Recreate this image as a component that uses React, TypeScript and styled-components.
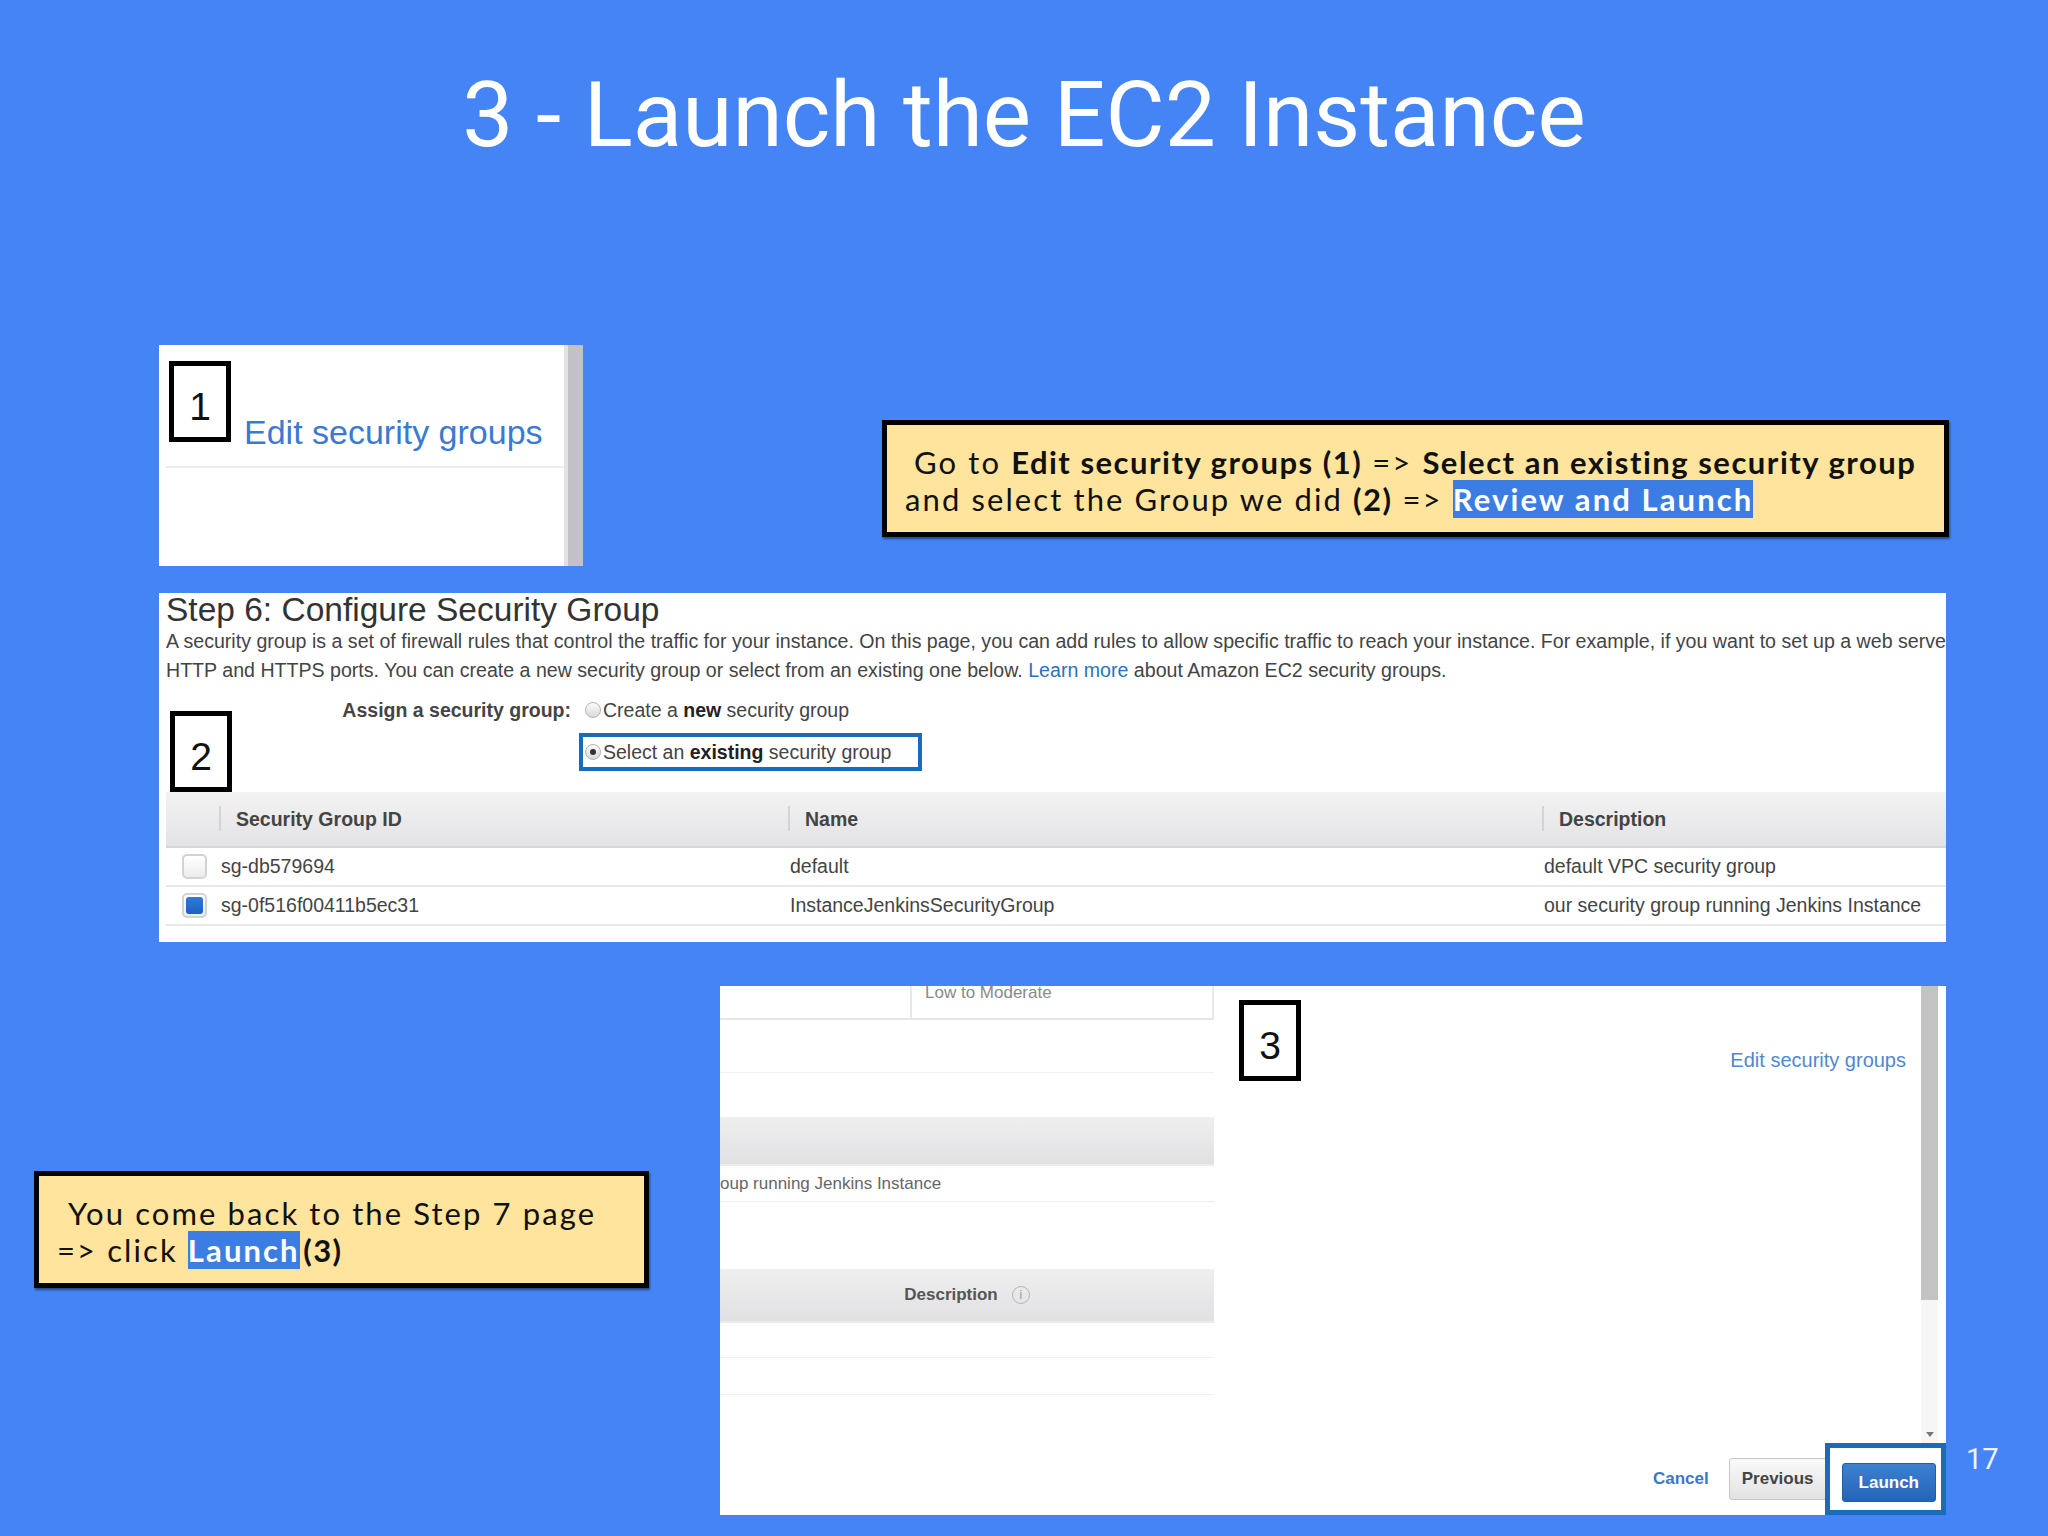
import React from "react";
import styled, { createGlobalStyle } from "styled-components";

const GlobalStyle = createGlobalStyle`
  html, body {
    margin: 0;
    padding: 0;
    background: #4584f4;
  }
  * {
    box-sizing: border-box;
  }
`;

const Slide = styled.div`
  width: 2048px;
  height: 1536px;
  background: #4584f4;
  display: flex;
  flex-direction: column;
  overflow: hidden;
  font-family: "Liberation Sans", Arial, sans-serif;
`;

const Title = styled.h1`
  margin: 60px 0 0;
  height: 110px;
  line-height: 110px;
  font-family: Roboto, "Noto Sans", sans-serif;
  font-weight: 400;
  font-size: 91px;
  color: #ffffff;
  text-align: center;
`;

const TopRow = styled.div`
  display: flex;
  align-items: flex-start;
  margin-top: 175px;
  padding-left: 159px;
`;

/* ---- screenshot 1: edit security groups ---- */

const EditPanel = styled.div`
  width: 424px;
  height: 221px;
  background: #ffffff;
  display: flex;
`;

const EditBody = styled.div`
  flex: 1;
  display: flex;
  flex-direction: column;
  padding: 16px 0 0 10px;
`;

const EditHeader = styled.div`
  display: flex;
  align-items: flex-start;
  gap: 13px;
`;

const NumBox = styled.div`
  width: 62px;
  height: 81px;
  flex-shrink: 0;
  border: 5px solid #000;
  background: #fff;
  display: flex;
  align-items: center;
  justify-content: center;
  padding-top: 10px;
  font-family: "Liberation Sans", Arial, sans-serif;
  font-size: 39px;
  color: #111;
`;

const EditLink = styled.span`
  margin-top: 51px;
  font-size: 34px;
  line-height: 40px;
  color: #3b7ad2;
  white-space: nowrap;
`;

const EditDivider = styled.div`
  margin: 14px 0 0 -4px;
  height: 2px;
  background: #ededed;
`;

const EditScroll = styled.div`
  width: 19px;
  background: #c2c1c5;
  border-left: 4px solid #e2e2e4;
`;

/* ---- callouts ---- */

const Callout = styled.div<{ $left: number; $top: number; $width: number }>`
  margin-left: ${(p) => p.$left}px;
  margin-top: ${(p) => p.$top}px;
  width: ${(p) => p.$width}px;
  height: 117px;
  flex-shrink: 0;
  border: 5px solid #000;
  box-shadow: 1px 2px 2px rgba(0, 0, 0, 0.45);
  background: #fee49c;
  padding: 19px 0 0 18px;
  font-family: Lato, "Open Sans", sans-serif;
  font-size: 31px;
  line-height: 37px;
  letter-spacing: 2.1px;
  color: #111;
  white-space: nowrap;
`;

const CalloutLine = styled.div<{ $indent?: number }>`
  padding-left: ${(p) => p.$indent ?? 0}px;
`;

const B = styled.b`
  font-weight: 700;
  letter-spacing: 1.5px;
`;

const Highlight = styled.span`
  background: #3c7de4;
  color: #ffffff;
  font-weight: 700;
`;

/* ---- screenshot 2: step 6 ---- */

const StepPanel = styled.section`
  margin: 27px 0 0 159px;
  width: 1787px;
  height: 349px;
  background: #ffffff;
  overflow: hidden;
  padding-left: 7px;
  white-space: nowrap;
  color: #444;
`;

const StepTitle = styled.h2`
  margin: 0;
  font-weight: 400;
  font-size: 33.5px;
  line-height: 34px;
  color: #333;
`;

const StepText = styled.p`
  margin: 0;
  font-size: 19.6px;
  line-height: 29px;
  color: #444;
`;

const TextLink = styled.span`
  color: #2a72c0;
`;

const FormArea = styled.div`
  display: flex;
  align-items: flex-end;
  height: 107px;
  padding-left: 4px;
`;

const FormFields = styled.div`
  align-self: flex-start;
  margin-top: 7px;
  display: grid;
  grid-template-columns: 339px auto;
  column-gap: 8px;
  row-gap: 5px;
  font-size: 19.5px;
`;

const FieldLabel = styled.div`
  height: 36px;
  line-height: 36px;
  text-align: right;
  font-weight: 700;
  color: #444;
`;

const Option = styled.label<{ $selected?: boolean }>`
  display: flex;
  align-items: center;
  height: ${(p) => (p.$selected ? 38 : 36)}px;
  width: ${(p) => (p.$selected ? "343px" : "auto")};
  padding-left: ${(p) => (p.$selected ? 2 : 6)}px;
  border: ${(p) => (p.$selected ? "4px solid #1b6cb8" : "none")};
  line-height: 24px;
  color: #444;

  b {
    color: #222;
  }
`;

const Radio = styled.span<{ $checked?: boolean }>`
  width: 16px;
  height: 16px;
  margin-right: 2px;
  border-radius: 50%;
  border: 1px solid #b4b4b4;
  background: linear-gradient(#fbfbfb, #d9d9d9);
  display: flex;
  align-items: center;
  justify-content: center;

  &::after {
    content: "";
    width: 6px;
    height: 6px;
    border-radius: 50%;
    background: ${(p) => (p.$checked ? "#333" : "transparent")};
  }
`;

const columns = "53px 569px 754px 1fr";

const HeaderRow = styled.div`
  display: grid;
  grid-template-columns: ${columns};
  height: 56px;
  align-items: center;
  background: linear-gradient(#f3f3f4, #e3e3e5);
  border-bottom: 2px solid #d6d6d8;
`;

const HeaderCell = styled.div<{ $divider?: boolean }>`
  position: relative;
  padding-left: 17px;
  font-size: 19.5px;
  font-weight: 700;
  color: #444;

  &::before {
    content: "";
    display: ${(p) => (p.$divider ? "block" : "none")};
    position: absolute;
    left: 0;
    top: 50%;
    width: 2px;
    height: 25px;
    margin-top: -13px;
    background: #d4d4d6;
  }
`;

const DataRow = styled.div`
  display: grid;
  grid-template-columns: ${columns};
  height: 39px;
  align-items: center;
  border-bottom: 2px solid #e8e8e8;
`;

const DataCell = styled.div`
  padding-left: 2px;
  font-size: 19.5px;
  color: #444;
`;

const CheckCell = styled.div`
  padding-left: 16px;
  display: flex;
  align-items: center;
`;

const Checkbox = styled.span<{ $checked?: boolean }>`
  width: 25px;
  height: 25px;
  border-radius: 5px;
  border: 2px solid #d3d3d3;
  padding: 2px;
  background: linear-gradient(#ffffff, #ececec);
  display: flex;

  &::after {
    content: "";
    flex: 1;
    border-radius: 3px;
    background: ${(p) =>
      p.$checked ? "linear-gradient(#2f7ad8, #1c62bd)" : "transparent"};
  }
`;

/* ---- bottom row ---- */

const BottomRow = styled.div`
  display: flex;
  align-items: flex-start;
  margin-top: 44px;
`;

const ReviewPanel = styled.section`
  margin-left: 71px;
  width: 1226px;
  height: 529px;
  flex-shrink: 0;
  background: #ffffff;
  display: flex;
  flex-direction: column;
  overflow: hidden;
`;

const ReviewBody = styled.div`
  height: 457px;
  display: flex;
`;

const SideColumn = styled.div`
  width: 494px;
  display: flex;
  flex-direction: column;
  font-size: 17px;
  color: #666;
`;

const LowRow = styled.div`
  height: 34px;
  border-bottom: 2px solid #e6e6e6;
  padding-left: 190px;
  display: flex;
`;

const LowCell = styled.div`
  flex: 1;
  border-left: 2px solid #e8e8e8;
  border-right: 2px solid #e8e8e8;
  padding-left: 13px;
  line-height: 20px;
  margin-top: -3px;
  color: #8a8a8a;
`;

const Spacer = styled.div<{ $h: number; $line?: boolean }>`
  height: ${(p) => p.$h}px;
  flex-shrink: 0;
  border-bottom: ${(p) => (p.$line ? "1px solid #f0f0f0" : "none")};
`;

const GrayBar = styled.div<{ $h: number }>`
  height: ${(p) => p.$h}px;
  flex-shrink: 0;
  background: linear-gradient(#efeff0, #e1e1e3);
  border-bottom: 2px solid #ececec;
  display: flex;
  align-items: center;
  justify-content: center;
  gap: 14px;
  font-weight: 700;
  color: #555;
`;

const TextRow = styled.div`
  height: 36px;
  flex-shrink: 0;
  display: flex;
  align-items: center;
  border-bottom: 1px solid #eeeeee;
  white-space: nowrap;
  color: #666;
`;

const InfoIcon = styled.span`
  width: 18px;
  height: 18px;
  border-radius: 50%;
  border: 1.5px solid #b5b5b5;
  display: flex;
  align-items: center;
  justify-content: center;
  font-size: 12px;
  font-weight: 400;
  color: #9a9a9a;
`;

const MiddleColumn = styled.div`
  flex: 1;
  display: flex;
  align-items: flex-start;
  padding: 14px 15px 0 25px;
`;

const SmallLink = styled.span`
  margin-left: auto;
  margin-top: 48px;
  font-size: 20px;
  line-height: 24px;
  color: #5088d0;
  white-space: nowrap;
`;

const ScrollBar = styled.div`
  width: 17px;
  margin-right: 8px;
  display: flex;
  flex-direction: column;
`;

const ScrollThumb = styled.div`
  height: 314px;
  background: #c3c3c3;
`;

const ScrollTrack = styled.div`
  flex: 1;
  background: #f6f6f6;
  display: flex;
  align-items: flex-end;
  justify-content: center;
  padding-bottom: 6px;

  &::after {
    content: "";
    border-left: 4px solid transparent;
    border-right: 4px solid transparent;
    border-top: 5px solid #777;
  }
`;

const Footer = styled.div`
  height: 72px;
  display: flex;
  justify-content: flex-end;
  align-items: center;
`;

const CancelLink = styled.span`
  margin-right: 20px;
  font-size: 17px;
  font-weight: 700;
  color: #3a77c9;
`;

const Button = styled.button<{ $primary?: boolean }>`
  height: ${(p) => (p.$primary ? 39 : 42)}px;
  padding: 0 ${(p) => (p.$primary ? 16 : 12)}px;
  border-radius: 3px;
  border: 1px solid ${(p) => (p.$primary ? "#1f5ea8" : "#c6c6c6")};
  background: ${(p) =>
    p.$primary
      ? "linear-gradient(#3c81d2, #2464b5)"
      : "linear-gradient(#fafafa, #e2e2e2)"};
  color: ${(p) => (p.$primary ? "#ffffff" : "#444444")};
  font-family: "Liberation Sans", Arial, sans-serif;
  font-size: 17px;
  font-weight: 700;
`;

const LaunchFrame = styled.div`
  align-self: stretch;
  border: 5px solid #1b6cb8;
  padding: 15px 5px 8px 12px;
  margin-left: -2px;
  display: flex;
  align-items: flex-start;
`;

const PageNumber = styled.div`
  margin: 456px 0 0 20px;
  font-family: Roboto, "Noto Sans", sans-serif;
  font-size: 29px;
  line-height: 34px;
  color: #eef3ff;
`;

export default function App() {
  return (
    <>
      <GlobalStyle />
      <Slide>
        <Title>3 - Launch the EC2 Instance</Title>

        <TopRow>
          <EditPanel>
            <EditBody>
              <EditHeader>
                <NumBox>1</NumBox>
                <EditLink>Edit security groups</EditLink>
              </EditHeader>
              <EditDivider />
            </EditBody>
            <EditScroll />
          </EditPanel>

          <Callout $left={299} $top={75} $width={1067}>
            <CalloutLine $indent={9}>
              Go to <B>Edit security groups (1)</B> =&gt;{" "}
              <B>Select an existing security group</B>
            </CalloutLine>
            <CalloutLine>
              and select the Group we did <B>(2)</B> =&gt;{" "}
              <Highlight>Review and Launch </Highlight>
            </CalloutLine>
          </Callout>
        </TopRow>

        <StepPanel>
          <StepTitle>Step 6: Configure Security Group</StepTitle>
          <StepText>
            A security group is a set of firewall rules that control the
            traffic for your instance. On this page, you can add rules to allow
            specific traffic to reach your instance. For example, if you want to
            set up a web server and allow Internet traffic to reach your
            instance, add rules that allow unrestricted access to the
          </StepText>
          <StepText>
            HTTP and HTTPS ports. You can create a new security group or select
            from an existing one below. <TextLink>Learn more</TextLink> about
            Amazon EC2 security groups.
          </StepText>

          <FormArea>
            <NumBox>2</NumBox>
            <FormFields>
              <FieldLabel>Assign a security group:</FieldLabel>
              <Option>
                <Radio />
                Create a&nbsp;<b>new</b>&nbsp;security group
              </Option>
              <div />
              <Option $selected>
                <Radio $checked />
                Select an&nbsp;<b>existing</b>&nbsp;security group
              </Option>
            </FormFields>
          </FormArea>

          <HeaderRow>
            <HeaderCell />
            <HeaderCell $divider>Security Group ID</HeaderCell>
            <HeaderCell $divider>Name</HeaderCell>
            <HeaderCell $divider>Description</HeaderCell>
          </HeaderRow>
          <DataRow>
            <CheckCell>
              <Checkbox />
            </CheckCell>
            <DataCell>sg-db579694</DataCell>
            <DataCell>default</DataCell>
            <DataCell>default VPC security group</DataCell>
          </DataRow>
          <DataRow>
            <CheckCell>
              <Checkbox $checked />
            </CheckCell>
            <DataCell>sg-0f516f00411b5ec31</DataCell>
            <DataCell>InstanceJenkinsSecurityGroup</DataCell>
            <DataCell>our security group running Jenkins Instance</DataCell>
          </DataRow>
        </StepPanel>

        <BottomRow>
          <Callout $left={34} $top={185} $width={615}>
            <CalloutLine $indent={11}>You come back to the Step 7 page</CalloutLine>
            <CalloutLine>
              =&gt; click <Highlight>Launch</Highlight>
              <B>&#8202;(3)</B>
            </CalloutLine>
          </Callout>

          <ReviewPanel>
            <ReviewBody>
              <SideColumn>
                <LowRow>
                  <LowCell>Low to Moderate</LowCell>
                </LowRow>
                <Spacer $h={53} $line />
                <Spacer $h={44} />
                <GrayBar $h={49} />
                <TextRow>oup running Jenkins Instance</TextRow>
                <Spacer $h={67} />
                <GrayBar $h={54}>
                  Description
                  <InfoIcon>i</InfoIcon>
                </GrayBar>
                <Spacer $h={35} $line />
                <Spacer $h={37} $line />
              </SideColumn>

              <MiddleColumn>
                <NumBox>3</NumBox>
                <SmallLink>Edit security groups</SmallLink>
              </MiddleColumn>

              <ScrollBar>
                <ScrollThumb />
                <ScrollTrack />
              </ScrollBar>
            </ReviewBody>

            <Footer>
              <CancelLink>Cancel</CancelLink>
              <Button>Previous</Button>
              <LaunchFrame>
                <Button $primary>Launch</Button>
              </LaunchFrame>
            </Footer>
          </ReviewPanel>

          <PageNumber>17</PageNumber>
        </BottomRow>
      </Slide>
    </>
  );
}
